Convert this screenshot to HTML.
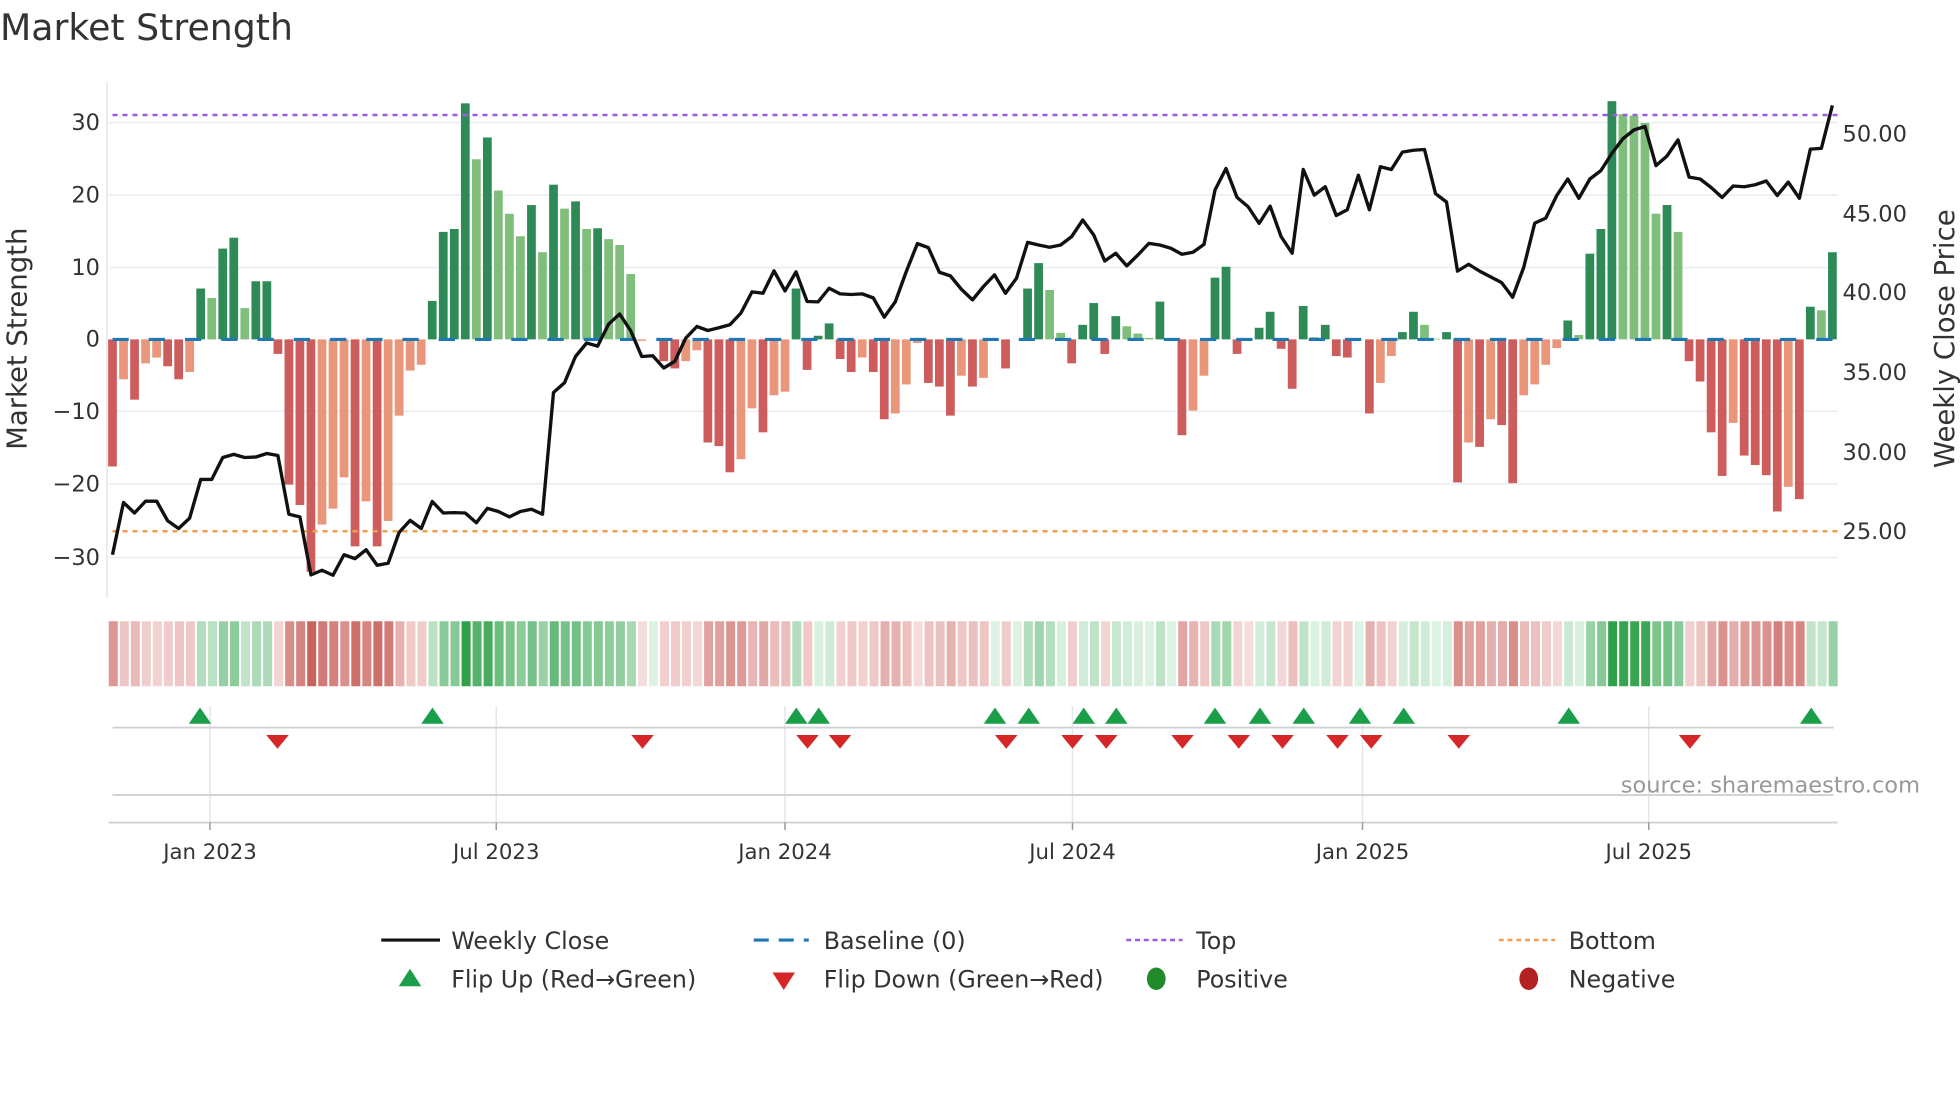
<!DOCTYPE html>
<html><head><meta charset="utf-8">
<style>
html,body{margin:0;padding:0;background:#fff;width:1960px;height:1102px;overflow:hidden}
svg{display:block}
text{font-family:"DejaVu Sans","Liberation Sans",sans-serif;fill:#333}
</style></head>
<body>
<svg id="s" width="1960" height="1102" viewBox="0 0 1568 881.6" xmlns="http://www.w3.org/2000/svg">
<text x="0" y="32" font-size="29" fill="#333">Market Strength</text>
<g id="grid" stroke="#eceff4" stroke-width="1.5">
<line x1="87" x2="1470" y1="98" y2="98"/><line x1="87" x2="1470" y1="156" y2="156"/><line x1="87" x2="1470" y1="214" y2="214"/>
<line x1="87" x2="1470" y1="329" y2="329"/><line x1="87" x2="1470" y1="387" y2="387"/><line x1="87" x2="1470" y1="446" y2="446"/>
</g>
<line x1="85.5" x2="85.5" y1="65" y2="478" stroke="#e8eaee" stroke-width="1.5"/>
<g font-size="18" text-anchor="end">
<text x="80" y="104">30</text><text x="80" y="162">20</text><text x="80" y="220">10</text><text x="80" y="277">0</text>
<text x="80" y="335">−10</text><text x="80" y="393">−20</text><text x="80" y="452">−30</text>
</g>
<g font-size="18">
<text x="1474" y="113">50.00</text><text x="1474" y="177">45.00</text><text x="1474" y="240">40.00</text>
<text x="1474" y="304">35.00</text><text x="1474" y="368">30.00</text><text x="1474" y="431">25.00</text>
</g>
<text transform="translate(21,271) rotate(-90)" text-anchor="middle" font-size="22">Market Strength</text>
<text transform="translate(1563,271) rotate(-90)" text-anchor="middle" font-size="22">Weekly Close Price</text>
<g id="bars"></g>
<line x1="90" x2="1470" y1="271.5" y2="271.5" stroke="#1f77b4" stroke-width="2.5" stroke-dasharray="13 16"/>
<line x1="90" x2="1470" y1="92" y2="92" stroke="#9b5de5" stroke-width="2" stroke-dasharray="4 4"/>
<line x1="90" x2="1470" y1="425" y2="425" stroke="#f0a050" stroke-width="2" stroke-dasharray="4 4"/>
<polyline id="price" fill="none" stroke="#111" stroke-width="2.7" stroke-linejoin="round"/>
<g id="heat"></g>
<g stroke="#e4e6ea" stroke-width="1.2">
<line x1="168" x2="168" y1="565" y2="658"/><line x1="397" x2="397" y1="565" y2="658"/><line x1="628" x2="628" y1="565" y2="658"/>
<line x1="858" x2="858" y1="565" y2="658"/><line x1="1090" x2="1090" y1="565" y2="658"/><line x1="1319" x2="1319" y1="565" y2="658"/>
</g>
<line x1="90" x2="1467" y1="582" y2="582" stroke="#cfd1d4" stroke-width="1.5"/>
<line x1="90" x2="1467" y1="636" y2="636" stroke="#cfd1d4" stroke-width="1.5"/>
<line x1="87" x2="1470" y1="658" y2="658" stroke="#cfd1d4" stroke-width="1.5"/>
<g stroke="#999" stroke-width="1.2">
<line x1="168" x2="168" y1="658" y2="664"/><line x1="397" x2="397" y1="658" y2="664"/><line x1="628" x2="628" y1="658" y2="664"/>
<line x1="858" x2="858" y1="658" y2="664"/><line x1="1090" x2="1090" y1="658" y2="664"/><line x1="1319" x2="1319" y1="658" y2="664"/>
</g>
<g id="tri"></g>
<g font-size="17" text-anchor="middle">
<text x="168" y="687">Jan 2023</text><text x="397" y="687">Jul 2023</text><text x="628" y="687">Jan 2024</text>
<text x="858" y="687">Jul 2024</text><text x="1090" y="687">Jan 2025</text><text x="1319" y="687">Jul 2025</text>
</g>
<text x="1536" y="634" font-size="18" text-anchor="end" style="fill:#999">source: sharemaestro.com</text>
<g font-size="19">
<line x1="305" x2="352" y1="752" y2="752" stroke="#111" stroke-width="2.5"/><text x="361" y="759">Weekly Close</text>
<line x1="603" x2="647" y1="752" y2="752" stroke="#1f77b4" stroke-width="2.5" stroke-dasharray="12 8"/><text x="659" y="759">Baseline (0)</text>
<line x1="901" x2="946" y1="752" y2="752" stroke="#9b5de5" stroke-width="2" stroke-dasharray="4 3"/><text x="957" y="759">Top</text>
<line x1="1199" x2="1244" y1="752" y2="752" stroke="#f0a050" stroke-width="2" stroke-dasharray="4 3"/><text x="1255" y="759">Bottom</text>
<polygon points="319,789 337,789 328,775" fill="#1a9e4a"/><text x="361" y="790">Flip Up (Red→Green)</text>
<polygon points="618,778 636,778 627,792" fill="#d62728"/><text x="659" y="790">Flip Down (Green→Red)</text>
<ellipse cx="925" cy="783" rx="7.5" ry="9" fill="#218a2b"/><text x="957" y="790">Positive</text>
<ellipse cx="1223" cy="783" rx="7.5" ry="9" fill="#b22222"/><text x="1255" y="790">Negative</text>
</g>
</svg>
<script>
var V=[-17.5,'R',-5.5,'S',-8.3,'R',-3.3,'S',-2.5,'S',-3.7,'R',-5.5,'R',-4.5,'S',7,'D',5.7,'L',12.5,'D',14,'D',4.3,'L',8,'D',8,'D',-2,'R',-20,'R',-22.8,'R',-32,'R',-25.5,'S',-23.3,'S',-19,'S',-28.5,'R',-22.3,'S',-28.5,'R',-25,'S',-10.5,'S',-4.3,'S',-3.5,'S',5.3,'D',14.8,'D',15.2,'D',32.5,'D',24.8,'L',27.8,'D',20.5,'L',17.3,'L',14.2,'L',18.5,'D',12,'L',21.3,'D',18,'L',19,'D',15.2,'L',15.3,'D',13.8,'L',13,'L',9,'L',-0.2,'S',0,'S',-3,'R',-4,'R',-3,'S',-1.5,'S',-14.2,'R',-14.7,'R',-18.3,'R',-16.5,'S',-9.5,'S',-12.8,'R',-7.7,'S',-7.2,'S',7,'D',-4.2,'R',0.5,'D',2.2,'D',-2.7,'R',-4.5,'R',-2.5,'S',-4.5,'R',-11,'R',-10.2,'S',-6.2,'S',-0.5,'S',-6,'R',-6.5,'R',-10.5,'R',-5,'S',-6.5,'R',-5.3,'S',0,'S',-4,'R',0,'S',7,'D',10.5,'D',6.8,'L',0.9,'L',-3.3,'R',2,'D',5,'D',-2,'R',3.2,'D',1.8,'L',0.8,'L',0.2,'L',5.2,'D',0,'S',-13.2,'R',-9.8,'S',-5,'S',8.5,'D',10,'D',-2,'R',-0.2,'S',1.6,'D',3.8,'D',-1.3,'R',-6.8,'R',4.6,'D',0.3,'L',2,'D',-2.3,'R',-2.5,'R',0,'S',-10.2,'R',-6,'S',-2.3,'S',1,'D',3.8,'D',2,'L',0.1,'L',1,'D',-19.7,'R',-14.2,'S',-14.8,'R',-11,'S',-11.8,'R',-19.8,'R',-7.7,'S',-6.2,'S',-3.5,'S',-1.2,'S',2.6,'D',0.6,'L',11.8,'D',15.2,'D',32.8,'D',31,'L',30.8,'L',29.8,'L',17.3,'L',18.5,'D',14.8,'L',-3,'R',-5.8,'R',-12.8,'R',-18.8,'R',-11.5,'S',-16,'R',-17.3,'R',-18.7,'R',-23.7,'R',-20.3,'S',-22,'R',4.5,'D',4,'L',12,'D'];
var P=[443.8,402,410.4,400.9,400.9,416.6,422.8,414.5,383.5,383.5,366,363.5,366,365.6,362.8,364.4,411.4,413.5,459.9,456.2,460.2,443.8,446.9,439.8,452.2,450.6,425.9,416.3,422.8,401.2,410.4,410.1,410.4,418.2,406.7,409.2,413.5,409.2,407.4,411.4,314,306.2,285.2,274.4,276.9,259.3,251.2,264.5,285.2,284.6,
294.4,289.1,270.5,261.2,264.4,262.2,259.8,250.5,233.5,234.6,216.7,232.7,217.5,241.2,241.5,230.6,235.1,235.6,235.1,238.3,253.7,241.5,217.3,194.9,198.1,217.8,220.7,231.4,239.9,229.2,219.9,
234.6,222.6,193.9,196,197.8,196,189.3,176,188,208.8,202.6,212.7,204,194.7,196,198.6,203.4,201.8,195.5,152,134.8,157.9,165.4,178.7,164.9,189.3,202.6,
135.6,156.1,149.4,172.4,167.8,140.2,167.8,133.4,135.6,121.7,120.2,119.6,154.9,161.6,216.9,211.4,216.9,221.5,226.1,237.8,213.8,178.5,174.5,156.4,143.2,158.6,143.2,136.5,122.7,111,103.9,101.2,132.5,124.8,111.9,141.7,143.2,150,158,148.8,149.4,147.8,144.8,156.4,145.7,158.6,119.3,118.7,84.3];
var C={D:'#2e8b57',L:'#7fbf7b',R:'#cd5c5c',S:'#e9967a'};
var ns='http://www.w3.org/2000/svg',Z=271.5,K=5.81,W=8.82;
function mk(t,a,p){var e=document.createElementNS(ns,t);for(var k in a)e.setAttribute(k,a[k]);p.appendChild(e);return e;}
var gb=document.getElementById('bars'),gh=document.getElementById('heat'),pts=[];
function mix(a,b,t){return 'rgb('+[0,1,2].map(function(i){return Math.round(a[i]+(b[i]-a[i])*t)}).join(',')+')';}
for(var i=0;i<157;i++){
 var v=V[2*i],c=V[2*i+1],x=90+i*W;
 if(Math.abs(v)>0.05){var h=Math.abs(v)*K;mk('rect',{x:x-3.5,y:v>0?Z-h:Z,width:7,height:h,fill:C[c]},gb);}
 var t=Math.min(1,Math.pow(Math.abs(v)/33,0.9));
 var col=v>=0?mix([222,242,227],[46,160,72],t):mix([246,222,222],[200,96,90],t);
 mk('rect',{x:87+i*W,y:497,width:W-1.6,height:52,fill:col},gh);
 pts.push(x.toFixed(1)+','+P[i]);
}
document.getElementById('price').setAttribute('points',pts.join(' '));
var gt=document.getElementById('tri');
[160,346,637,655,796,823,867,893,972,1008,1043,1088,1123,1255,1449].forEach(function(x){mk('polygon',{points:(x-9)+',579 '+(x+9)+',579 '+x+',566',fill:'#1a9e4a'},gt);});
[222,514,646,672,805,858,885,946,991,1026,1070,1097,1167,1352].forEach(function(x){mk('polygon',{points:(x-9)+',588 '+(x+9)+',588 '+x+',599',fill:'#d62728'},gt);});
</script>
</body></html>
